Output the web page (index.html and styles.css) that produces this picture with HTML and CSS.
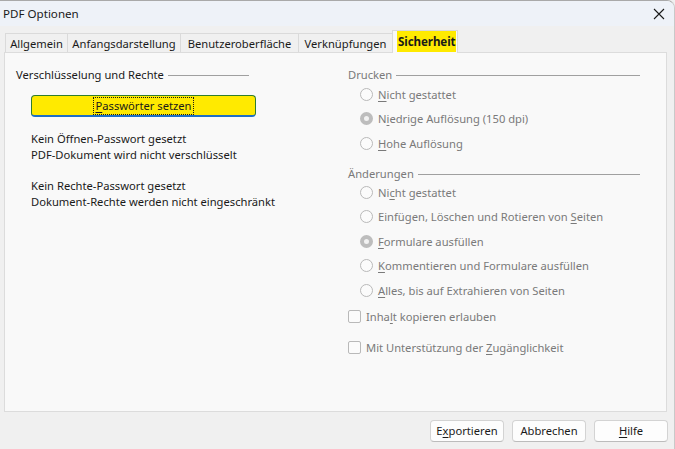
FILE: index.html
```html
<!DOCTYPE html>
<html lang="de">
<head>
<meta charset="utf-8">
<title>PDF Optionen</title>
<link rel="stylesheet" href="styles.css">
</head>
<body>
<div class="window">
  <div class="titlebar">
    <span class="title">PDF Optionen</span>
    <svg class="close" width="12" height="12" viewBox="0 0 12 12"><path d="M1 1 L11 11 M11 1 L1 11" stroke="#1a1a1a" stroke-width="1.1" fill="none"/></svg>
  </div>
  <div class="tabs">
    <div class="tab t1">Allgemein</div>
    <div class="tab t2">Anfangsdarstellung</div>
    <div class="tab t3">Benutzeroberfläche</div>
    <div class="tab t4">Verknüpfungen</div>
    <div class="tab t5 active"><span class="hl">Sicherheit</span></div>
  </div>
  <div class="panel">
    <div class="col-left">
      <div class="group-head"><span>Verschlüsselung und Rechte</span><span class="rule"></span></div>
      <div class="btn-pw"><span class="focus"><u>P</u>asswörter setzen</span></div>
      <p class="info first">Kein Öffnen-Passwort gesetzt<br>PDF-Dokument wird nicht verschlüsselt</p>
      <p class="info second">Kein Rechte-Passwort gesetzt<br>Dokument-Rechte werden nicht eingeschränkt</p>
    </div>
    <div class="col-right">
      <div class="group-head dis"><span>Drucken</span><span class="rule"></span></div>
      <div class="opt"><span class="radio"></span><span><u>N</u>icht gestattet</span></div>
      <div class="opt"><span class="radio on"></span><span>N<u>i</u>edrige Auflösung (150 dpi)</span></div>
      <div class="opt"><span class="radio"></span><span><u>H</u>ohe Auflösung</span></div>
      <div class="group-head dis second-head"><span>Änderungen</span><span class="rule"></span></div>
      <div class="opt"><span class="radio"></span><span>Ni<u>c</u>ht gestattet</span></div>
      <div class="opt"><span class="radio"></span><span>Einfügen, Löschen und Rotieren von <u>S</u>eiten</span></div>
      <div class="opt"><span class="radio on"></span><span><u>F</u>ormulare ausfüllen</span></div>
      <div class="opt"><span class="radio"></span><span><u>K</u>ommentieren und Formulare ausfüllen</span></div>
      <div class="opt"><span class="radio"></span><span><u>A</u>lles, bis auf Extrahieren von Seiten</span></div>
      <div class="chk c1"><span class="box"></span><span>Inha<u>l</u>t kopieren erlauben</span></div>
      <div class="chk c2"><span class="box"></span><span>Mit Unterstützung der <u>Z</u>ugänglichkeit</span></div>
    </div>
  </div>
  <div class="footer">
    <div class="btn">E<u>x</u>portieren</div>
    <div class="btn">Abbrechen</div>
    <div class="btn"><u>H</u>ilfe</div>
  </div>
</div>
</body>
</html>
```
FILE: styles.css
```css
html, body {
  margin: 0;
  padding: 0;
}
body {
  width: 675px;
  height: 449px;
  overflow: hidden;
  background: #f0f0f0;
  font-family: "Noto Sans", "Open Sans", sans-serif;
  font-size: 11.2px;
  color: #1a1a1a;
}
u {
  text-decoration: underline;
  text-underline-offset: 2px;
  text-decoration-thickness: 1px;
}
.window {
  height: 449px;
  box-sizing: border-box;
  display: flex;
  flex-direction: column;
  border-top: 1px solid #a9a9a9;
  border-right: 1px solid #c9c9c9;
  border-top-right-radius: 8px;
  overflow: hidden;
}
.titlebar {
  height: 25px;
  background: #eef2f8;
  display: flex;
  align-items: center;
  justify-content: space-between;
  padding: 0 8px 0 3px;
  flex: none;
}
.title {
  line-height: 16px;
  font-size: 11.6px;
}
.close {
  margin-right: 1px;
}
.tabs {
  height: 27px;
  display: flex;
  align-items: flex-end;
  padding-left: 5px;
  margin-bottom: -1px;
  flex: none;
}
.tab {
  height: 20px;
  box-sizing: border-box;
  border: 1px solid #dadada;
  border-bottom: none;
  border-right: none;
  background: #f0f0f0;
  display: flex;
  align-items: center;
  justify-content: center;
  line-height: 16px;
  white-space: nowrap;
}
.t1 { width: 62px; }
.t2 { width: 113px; }
.t3 { width: 118px; }
.t4 { width: 94px; }
.t5 { width: 66px; }
.tab.active {
  height: 23px;
  background: #f9f9f9;
  border-right: 1px solid #dadada;
  position: relative;
  z-index: 1;
  justify-content: flex-start;
  align-items: flex-start;
  padding-left: 4px;
}
.hl {
  background: #ffea00;
  font-weight: bold;
  display: inline-block;
  height: 21px;
  line-height: 21px;
  width: 59px;
  box-sizing: border-box;
  padding: 0 0 0 1px;
  font-size: 11.6px;
  letter-spacing: -0.1px;
}
.panel {
  height: 360px;
  box-sizing: border-box;
  margin: 0 7px 0 4px;
  background: #f9f9f9;
  border: 1px solid #dcdcdc;
  display: flex;
  padding: 14px 0 0 11px;
  flex: none;
}
.col-left {
  width: 233px;
  flex: none;
}
.col-right {
  width: 292px;
  margin-left: 99px;
  flex: none;
}
.group-head {
  display: flex;
  align-items: center;
  line-height: 16px;
  height: 16px;
  white-space: nowrap;
}
.rule {
  flex: 1;
  height: 1px;
  background: #a0a0a0;
  margin-left: 4px;
}
.dis {
  color: #7a7a7a;
  margin-bottom: -1px;
}
.second-head {
  margin-top: 10.5px;
  margin-bottom: -2px;
}
.btn-pw {
  margin-top: 12px;
  margin-left: 15px;
  width: 225px;
  height: 22px;
  box-sizing: border-box;
  background: #ffea00;
  border: 1px solid #2f7d2f;
  border-bottom: 2px solid #1f6fc5;
  border-radius: 4px;
  display: flex;
  align-items: center;
  justify-content: center;
}
.focus {
  outline: 1px dotted #1a1a1a;
  outline-offset: 0;
  line-height: 16px;
  padding: 0 1px;
}
.info {
  margin: 14px 0 0 15px;
  line-height: 16px;
  white-space: nowrap;
}
.info.second {
  margin-top: 15px;
}
.opt {
  height: 24.5px;
  display: flex;
  align-items: center;
  padding-left: 12px;
  color: #7a7a7a;
  white-space: nowrap;
}
.radio {
  width: 11px;
  height: 11px;
  border: 1px solid #b9b9b9;
  border-radius: 50%;
  background: #fbfbfb;
  margin-right: 5px;
  flex: none;
  box-sizing: content-box;
}
.radio.on {
  width: 5px;
  height: 5px;
  border: 4px solid #bdbdbd;
  background: #f2f2f2;
}
.chk {
  height: 24px;
  display: flex;
  align-items: center;
  color: #7a7a7a;
  white-space: nowrap;
}
.chk.c1 { margin-top: 2px; }
.chk.c2 { margin-top: 6.5px; }
.box {
  width: 11px;
  height: 11px;
  border: 1px solid #b9b9b9;
  border-radius: 2px;
  background: #fbfbfb;
  margin-right: 5px;
  flex: none;
}
.footer {
  display: flex;
  justify-content: flex-end;
  gap: 8px;
  padding: 8px 6px 0 0;
}
.btn {
  width: 74px;
  height: 22px;
  box-sizing: border-box;
  background: #fdfdfd;
  border: 1px solid #d3d3d3;
  border-bottom-color: #bcbcbc;
  border-radius: 4px;
  display: flex;
  align-items: center;
  justify-content: center;
  line-height: 16px;
}
```
